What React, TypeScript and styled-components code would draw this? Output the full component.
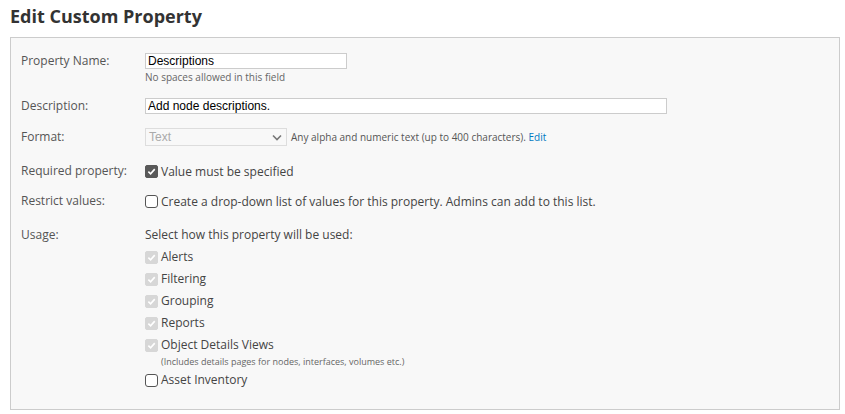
import React from 'react'
import styled, { createGlobalStyle } from 'styled-components'

const GlobalStyle = createGlobalStyle`
    body {
        margin: 0;
        background: #fff;
        font-family: "Open Sans", sans-serif;
    }
`

const Page = styled.div`
    padding: 4px 10px 0 10px;
    width: 830px;
`

const Title = styled.h2`
    margin: 0 0 9px 0;
    font-size: 18px;
    line-height: 24px;
    font-weight: 700;
    color: #333;
`

const Panel = styled.div`
    border: 1px solid #ccc;
    background: #f8f8f8;
    padding: 14px 10px 18px 10px;
    display: flex;
    flex-direction: column;
`

const Row = styled.div<{ $gap?: number }>`
    display: flex;
    align-items: flex-start;
    margin-bottom: ${props => props.$gap ?? 0}px;
`

const Label = styled.div<{ $tall?: boolean }>`
    width: 124px;
    flex-shrink: 0;
    font-size: 12px;
    line-height: ${props => props.$tall ? '22px' : '18px'};
    color: #555;
`

const Field = styled.div`
    display: flex;
    flex-direction: column;
    font-size: 12px;
    line-height: 18px;
    color: #444;
`

const TextInput = styled.input<{ $w: number }>`
    box-sizing: border-box;
    width: ${props => props.$w}px;
    height: 16px;
    margin: 1px 0;
    padding: 0 2px;
    border: 1px solid #ccc;
    background: #fff;
    font-family: "Liberation Sans", Arial, sans-serif;
    font-size: 12px;
    color: #000;
    outline: none;
`

const Hint = styled.span`
    font-size: 10px;
    line-height: 14px;
    color: #666;
`

const Inline = styled.div`
    display: flex;
    align-items: center;
    gap: 4px;
`

const SelectBox = styled.div`
    box-sizing: border-box;
    width: 142px;
    height: 18px;
    border: 1px solid #ddd;
    background: #f8f8f8;
    display: flex;
    align-items: center;
    justify-content: space-between;
    padding: 0 4px 0 3px;
    font-family: "Liberation Sans", Arial, sans-serif;
    font-size: 12px;
    color: #aaa;
`

const SmallNote = styled.span`
    font-size: 10px;
    color: #555;

    a {
        color: #0079c2;
        text-decoration: none;
    }
`

const CheckLine = styled.label`
    display: flex;
    align-items: center;
    gap: 3px;
    height: 22px;
    font-size: 12px;
    color: #444;
`

const Box = styled.span<{ $state: 'on' | 'off' | 'disabled' }>`
    box-sizing: border-box;
    width: 13px;
    height: 13px;
    display: inline-flex;
    align-items: center;
    justify-content: center;
    flex-shrink: 0;
    background: ${props => props.$state === 'on' ? '#595959' : props.$state === 'disabled' ? '#d7d7d7' : '#fff'};
    border: 1px solid ${props => props.$state === 'on' ? '#595959' : props.$state === 'disabled' ? '#d7d7d7' : '#555'};
    border-radius: ${props => props.$state === 'off' ? '3px' : '2px'};
`

const SubNote = styled.span`
    font-size: 9px;
    line-height: 14px;
    color: #666;
    margin-left: 16px;
    margin-top: -1px;
`

type CheckState = 'on' | 'off' | 'disabled'

const Check: React.FC<{ state: CheckState }> = ({ state }) => (
    <Box $state={state}>
        {state !== 'off' && (
            <svg width="9" height="9" viewBox="0 0 10 10">
                <path d="M1.5 5.2 L4 7.6 L8.6 2.4" fill="none" stroke="#fff" strokeWidth="1.8" />
            </svg>
        )}
    </Box>
)

const usages = ['Alerts', 'Filtering', 'Grouping', 'Reports']

const App: React.FC = () => {
    return (
        <Page>
            <GlobalStyle />
            <Title>Edit Custom Property</Title>
            <Panel>
                <Row $gap={13}>
                    <Label>Property Name:</Label>
                    <Field>
                        <TextInput $w={202} defaultValue="Descriptions" />
                        <Hint>No spaces allowed in this field</Hint>
                    </Field>
                </Row>
                <Row $gap={13}>
                    <Label>Description:</Label>
                    <Field>
                        <TextInput $w={522} defaultValue="Add node descriptions." />
                    </Field>
                </Row>
                <Row $gap={14}>
                    <Label>Format:</Label>
                    <Inline>
                        <SelectBox>
                            Text
                            <svg width="10" height="7" viewBox="0 0 10 7">
                                <path d="M1 1.5 L5 5.5 L9 1.5" fill="none" stroke="#777" strokeWidth="1.6" />
                            </svg>
                        </SelectBox>
                        <SmallNote>
                            Any alpha and numeric text (up to 400 characters). <a href="#">Edit</a>
                        </SmallNote>
                    </Inline>
                </Row>
                <Row $gap={8}>
                    <Label $tall>Required property:</Label>
                    <CheckLine>
                        <Check state="on" />
                        Value must be specified
                    </CheckLine>
                </Row>
                <Row $gap={12}>
                    <Label $tall>Restrict values:</Label>
                    <CheckLine>
                        <Check state="off" />
                        Create a drop-down list of values for this property. Admins can add to this list.
                    </CheckLine>
                </Row>
                <Row>
                    <Label $tall>Usage:</Label>
                    <Field>
                        <CheckLine>Select how this property will be used:</CheckLine>
                        {usages.map(u => (
                            <CheckLine key={u}>
                                <Check state="disabled" />
                                {u}
                            </CheckLine>
                        ))}
                        <CheckLine>
                            <Check state="disabled" />
                            Object Details Views
                        </CheckLine>
                        <SubNote>(Includes details pages for nodes, interfaces, volumes etc.)</SubNote>
                        <CheckLine>
                            <Check state="off" />
                            Asset Inventory
                        </CheckLine>
                    </Field>
                </Row>
            </Panel>
        </Page>
    )
}

export default App
